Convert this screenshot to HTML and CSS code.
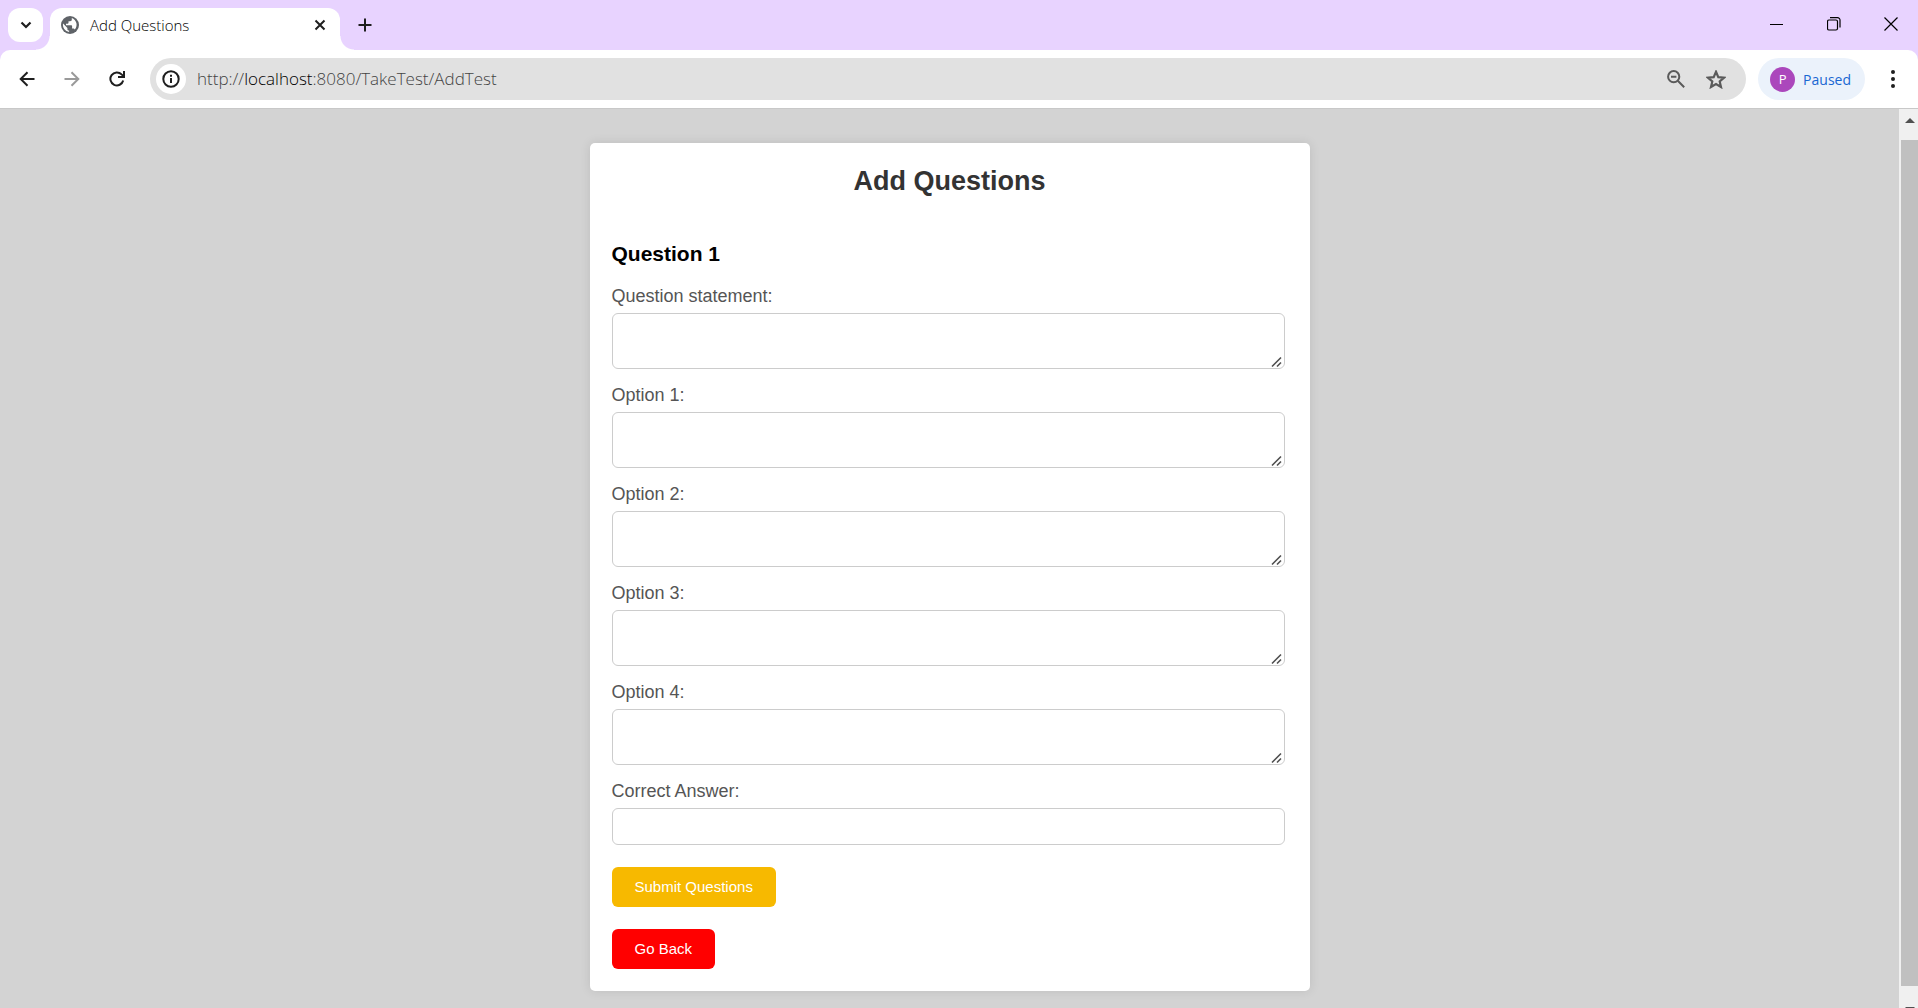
FILE: index.html
```html
<!DOCTYPE html>
<html lang="en">
<head>
<meta charset="utf-8">
<title>Add Questions</title>
<link rel="stylesheet" href="styles.css">
</head>
<body>
<header class="chrome">
  <div class="tab-strip">
    <button class="tab-search" aria-label="Search tabs"><svg width="12" height="8" viewBox="0 0 12 8"><path d="M1.500 1.500 6 6l4.500-4.500" fill="none" stroke="#1f1f1f" stroke-width="2.200"/></svg></button>
    <div class="tab">
      <svg class="globe" width="18" height="18" viewBox="0 0 18 18"><circle cx="9" cy="9" r="9" fill="#5f6368"/><path d="M10.800 2.100v1.700c0 1-.8 1.400-1.700 1.400H7.500v1.600c0 .6-.4.9-.9.9H5v1.500h5c.7 0 1.100.4 1.100 1v2.300h1c.8 0 1.400.5 1.600 1.100A7.100 7.100 0 0 0 10.800 2.100ZM2.100 7.400A7.100 7.100 0 0 0 8.100 16v-1.400c-1 0-1.700-.8-1.700-1.700v-.9Z" fill="#fff"/></svg>
      <span class="tab-title">Add Questions</span>
      <button class="plain" aria-label="Close tab"><svg width="12" height="12" viewBox="0 0 12 12"><path d="m1.500 1.500 9 9m0-9-9 9" stroke="#1f1f1f" stroke-width="2"/></svg></button>
    </div>
    <button class="plain new-tab" aria-label="New tab"><svg width="14" height="14" viewBox="0 0 14 14"><path d="M7 .5v13M.5 7h13" stroke="#1f1f1f" stroke-width="2"/></svg></button>
    <div class="window-controls">
      <button class="plain" aria-label="Minimize"><svg width="14" height="14" viewBox="0 0 14 14"><path d="M0 7.500h13" stroke="#000"/></svg></button>
      <button class="plain" aria-label="Restore"><svg width="14" height="14" viewBox="0 0 14 14"><rect x=".5" y="3" width="10" height="10" rx="1.500" fill="none" stroke="#000" stroke-width="1.200"/><path d="M3 .6h7.500a2.500 2.500 0 0 1 2.500 2.500v7.400" fill="none" stroke="#000" stroke-width="1.200"/></svg></button>
      <button class="plain" aria-label="Close"><svg width="14" height="14" viewBox="0 0 14 14"><path d="m.5.5 13 13m0-13-13 13" stroke="#000" stroke-width="1.200"/></svg></button>
    </div>
  </div>
  <nav class="toolbar">
    <button class="plain nav-button" aria-label="Back"><svg width="16" height="16" viewBox="0 0 16 16"><path d="M15.500 8H2M8.500 1.200 1.700 8l6.800 6.800" fill="none" stroke="#1f1f1f" stroke-width="2"/></svg></button>
    <button class="plain nav-button" aria-label="Forward"><svg width="16" height="16" viewBox="0 0 16 16"><path d="M.5 8H14M7.500 1.200 14.300 8l-6.800 6.800" fill="none" stroke="#9a9a9a" stroke-width="2"/></svg></button>
    <button class="plain nav-button" aria-label="Reload"><svg width="16" height="16" viewBox="0 0 16 16"><path d="M14.200 9.500A6.500 6.500 0 1 1 12.600 3.400L14.800 5.600M15 0v6H9" fill="none" stroke="#1f1f1f" stroke-width="2"/></svg></button>
    <div class="address">
      <button class="site-info" aria-label="Site information"><svg width="18" height="18" viewBox="0 0 18 18"><circle cx="9" cy="9" r="7.700" fill="none" stroke="#1f1f1f" stroke-width="2"/><path d="M9 8v5M9 4.700v2" stroke="#1f1f1f" stroke-width="2"/></svg></button>
      <a class="url" href="#">http://<span class="host">localhost</span>:8080/TakeTest/AddTest</a>
      <button class="plain" aria-label="Zoom"><svg width="18" height="18" viewBox="0 0 18 18"><circle cx="6.700" cy="6.700" r="5.600" fill="none" stroke="#5a5a5a" stroke-width="2"/><path d="M4 6.700h5.400M10.800 10.800l6.400 6.400" stroke="#5a5a5a" stroke-width="2"/></svg></button>
      <button class="plain" aria-label="Bookmark"><svg width="20" height="19" viewBox="0 0 20 19"><path d="m10 1.800 2.300 5.300 5.800.5-4.400 3.800 1.300 5.600-5-3-5 3 1.300-5.600L1.900 7.600l5.800-.5Z" fill="none" stroke="#5a5a5a" stroke-width="2.200"/></svg></button>
    </div>
    <button class="profile"><span class="avatar">P</span>Paused</button>
    <button class="plain menu-button" aria-label="Menu"><svg width="4" height="18" viewBox="0 0 4 18"><g fill="#1f1f1f"><circle cx="2" cy="2" r="2"/><circle cx="2" cy="9" r="2"/><circle cx="2" cy="16" r="2"/></g></svg></button>
  </nav>
</header>
<div class="viewport">
  <main class="page">
    <form class="card">
      <h1>Add Questions</h1>
      <h2>Question 1</h2>
      <label for="statement">Question statement:</label>
      <textarea id="statement"></textarea>
      <label for="option1">Option 1:</label>
      <textarea id="option1"></textarea>
      <label for="option2">Option 2:</label>
      <textarea id="option2"></textarea>
      <label for="option3">Option 3:</label>
      <textarea id="option3"></textarea>
      <label for="option4">Option 4:</label>
      <textarea id="option4"></textarea>
      <label for="answer">Correct Answer:</label>
      <input id="answer" type="text">
      <button class="action submit" type="submit">Submit Questions</button>
      <button class="action back" type="button">Go Back</button>
    </form>
  </main>
  <div class="scrollbar" aria-hidden="true">
    <div class="scroll-cap"><svg width="10" height="5" viewBox="0 0 10 5"><path d="M0 5 5 0l5 5Z" fill="#505050"/></svg></div>
    <div class="thumb"></div>
    <div class="scroll-end"><svg width="10" height="5" viewBox="0 0 10 5"><path d="M0 0h10L5 5Z" fill="#505050"/></svg></div>
  </div>
</div>
</body>
</html>
```
FILE: styles.css
```css
* { box-sizing: border-box; }
body {
  margin: 0;
  height: 100vh;
  display: flex;
  flex-direction: column;
  overflow: hidden;
  font-family: "Liberation Sans", Arial, sans-serif;
}
button { font-family: inherit; cursor: pointer; }
svg { display: block; flex: none; }

/* Browser frame */
.chrome {
  flex: none;
  background: #e8d3ff;
  font-family: "Open Sans", "Noto Sans", sans-serif;
}
.plain {
  display: flex;
  align-items: center;
  justify-content: center;
  padding: 0;
  border: 0;
  background: none;
}
.tab-strip {
  display: flex;
  height: 50px;
  padding: 8px 0 0 8px;
}
.tab-search {
  display: flex;
  align-items: center;
  justify-content: center;
  width: 35px;
  height: 34px;
  padding: 0;
  border: 0;
  border-radius: 12px;
  background: #fff;
}
.tab {
  position: relative;
  display: flex;
  align-items: center;
  width: 290px;
  height: 42px;
  margin-left: 7px;
  padding: 0 14px 8px 11px;
  border-radius: 12px 12px 0 0;
  background: #fff;
}
/* Flared feet that join the tab to the toolbar */
.tab::before,
.tab::after {
  content: "";
  position: absolute;
  bottom: 0;
  width: 14px;
  height: 14px;
}
.tab::before {
  right: 100%;
  background: radial-gradient(circle at 0 0, transparent 13px, #fff 14px);
}
.tab::after {
  left: 100%;
  background: radial-gradient(circle at 100% 0, transparent 13px, #fff 14px);
}
.tab-title {
  flex: 1;
  margin-left: 11px;
  font-size: 15px;
  font-weight: 300;
  line-height: 20px;
  color: #000;
}
.new-tab { width: 34px; height: 34px; margin-left: 8px; }
.window-controls {
  display: flex;
  gap: 43px;
  height: 32px;
  margin-left: auto;
  padding-right: 20px;
}
.toolbar {
  display: flex;
  align-items: center;
  height: 59px;
  padding: 0 15px 0 4px;
  border-bottom: 1px solid #c8c8c8;
  border-radius: 10px 10px 0 0;
  background: #fff;
}
.nav-button { width: 45px; height: 36px; }
.address {
  flex: 1;
  display: flex;
  align-items: center;
  gap: 21px;
  height: 42px;
  margin-left: 11px;
  padding: 0 20px 0 6px;
  border-radius: 21px;
  background: #e1e1e1;
}
.site-info {
  display: flex;
  align-items: center;
  justify-content: center;
  width: 30px;
  height: 30px;
  padding: 0;
  border: 0;
  border-radius: 50%;
  background: #fff;
}
.url {
  flex: 1;
  margin-left: -10px;
  font-size: 17px;
  font-weight: 300;
  line-height: 24px;
  color: #444;
  text-decoration: none;
}
.host { color: #000; }
.profile {
  display: flex;
  align-items: center;
  gap: 8px;
  height: 42px;
  margin-left: 12px;
  padding: 0 14px 0 12px;
  border: 0;
  border-radius: 21px;
  background: #ebf2fb;
  font-size: 14px;
  color: #1967d2;
}
.avatar {
  width: 25px;
  height: 25px;
  border-radius: 50%;
  background: #ab47bc;
  font-size: 13px;
  line-height: 25px;
  text-align: center;
  color: #fff;
}
.menu-button { width: 20px; height: 36px; margin-left: 18px; }

/* Page area */
.viewport {
  flex: 1;
  display: flex;
  min-height: 0;
  background: lightgray;
}
.page { flex: 1; padding: 34px 0; }
.card {
  display: flex;
  flex-direction: column;
  align-items: flex-start;
  max-width: 720px;
  margin: 0 auto;
  padding: 22px;
  border-radius: 5px;
  background: #fff;
  box-shadow: 0 0 11px rgba(0, 0, 0, 0.1);
}
h1 {
  align-self: center;
  margin: 0 0 44px;
  font-size: 27px;
  line-height: 33px;
  color: #333;
}
h2 {
  margin: 0 0 20px;
  font-size: 21px;
  line-height: 24px;
  color: #000;
}
label {
  margin-bottom: 7px;
  font-size: 18px;
  line-height: 20px;
  color: #555;
}
textarea,
input {
  display: block;
  width: calc(100% - 3px);
  padding: 8px;
  border: 1px solid #ccc;
  border-radius: 6px;
  background: #fff;
  font-family: inherit;
  font-size: 15px;
}
textarea { height: 56px; margin: 0 0 16px; resize: vertical; }
textarea::-webkit-resizer {
  background: url("data:image/svg+xml,%3Csvg xmlns='http://www.w3.org/2000/svg' width='15' height='15'%3E%3Cpath d='M3 13.500 12 4.500M8 13.500l4-4' stroke='%23505050' stroke-width='1.600'/%3E%3C/svg%3E") right bottom no-repeat;
}
input { height: 37px; margin: 0; }
.action {
  height: 40px;
  margin-top: 22px;
  padding: 0 23px 1px;
  border: 0;
  border-radius: 6px;
  font-size: 15px;
  color: #fff;
}
.submit { background: #f7b900; }
.back { background: #f00; }

/* Scroll bar */
.scrollbar {
  display: flex;
  flex-direction: column;
  width: 19px;
  padding-left: 2px;
  background: #f0f0f0;
}
.scroll-cap {
  display: flex;
  align-items: center;
  justify-content: center;
  height: 31px;
  padding-bottom: 8px;
}
.thumb { flex: 1; background: #c0c0c0; }
.scroll-end {
  display: flex;
  justify-content: center;
  height: 22px;
  padding-top: 21px;
  overflow: hidden;
}
```
